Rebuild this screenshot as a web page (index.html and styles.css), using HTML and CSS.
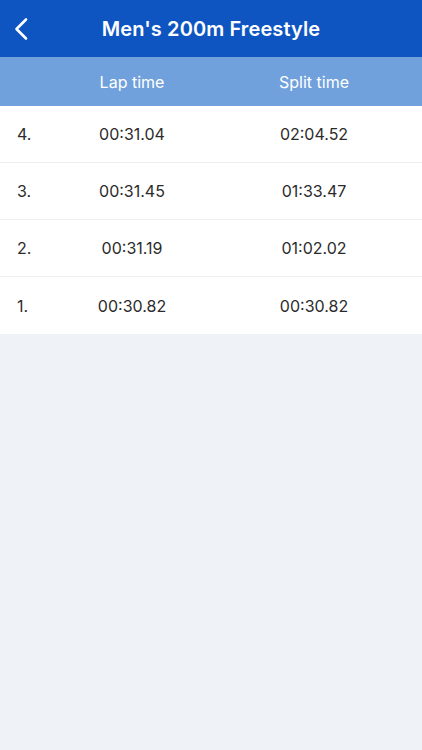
FILE: index.html
```html
<!DOCTYPE html>
<html lang="en">
<head>
    <meta charset="UTF-8">
    <meta name="viewport" content="width=device-width, initial-scale=1.0">
    <title>Men's 200m Freestyle</title>
    <link rel="stylesheet" href="styles.css">
</head>
<body>
    <!-- Top bar -->
    <div class="topbar">
        <button class="back" aria-label="Back">
            <svg width="16" height="24" viewBox="0 0 16 24">
                <polyline points="12,2.5 2.5,12 12,21.5" fill="none" stroke="#fff" stroke-width="2.6" stroke-linecap="round" stroke-linejoin="round"/>
            </svg>
        </button>
        <h1>Men's 200m Freestyle</h1>
        <span></span>
    </div>

    <!-- Column headers -->
    <div class="row head">
        <span></span>
        <span>Lap time</span>
        <span>Split time</span>
    </div>

    <!-- Laps -->
    <div class="laps">
        <div class="row">
            <span class="num">4.</span>
            <span>00:31.04</span>
            <span>02:04.52</span>
        </div>
        <div class="row">
            <span class="num">3.</span>
            <span>00:31.45</span>
            <span>01:33.47</span>
        </div>
        <div class="row">
            <span class="num">2.</span>
            <span>00:31.19</span>
            <span>01:02.02</span>
        </div>
        <div class="row">
            <span class="num">1.</span>
            <span>00:30.82</span>
            <span>00:30.82</span>
        </div>
    </div>
</body>
</html>
```

FILE: styles.css
```css
body {
    font-family: Inter, "Open Sans", sans-serif;
    margin: 0;
    padding: 0;
    background-color: #eff3f8;
    min-height: 100vh;
}
.topbar {
    display: grid;
    grid-template-columns: 48px 1fr 48px;
    align-items: center;
    height: 57px;
    background-color: #0e55c2;
    color: #fff;
}
.topbar h1 {
    margin: 0;
    text-align: center;
    font-size: 20px;
    font-weight: 600;
    letter-spacing: 0.1px;
}
.back {
    background: none;
    border: none;
    padding: 0 0 0 14px;
    height: 57px;
    display: flex;
    align-items: center;
    cursor: pointer;
}
.row {
    display: grid;
    grid-template-columns: 31px 168px 1fr;
    align-items: center;
    height: 57px;
    box-sizing: border-box;
    padding: 0 10px 0 17px;
    font-size: 16px;
    color: #2b2b2b;
    text-align: center;
}
.row.head {
    height: 49px;
    background-color: #70a1dc;
    color: #fff;
}
.laps {
    background: #fff;
}
.laps .row {
    border-bottom: 1px solid #eceff2;
}
.laps .row:last-child {
    border-bottom: none;
}
.num {
    text-align: left;
}
```
